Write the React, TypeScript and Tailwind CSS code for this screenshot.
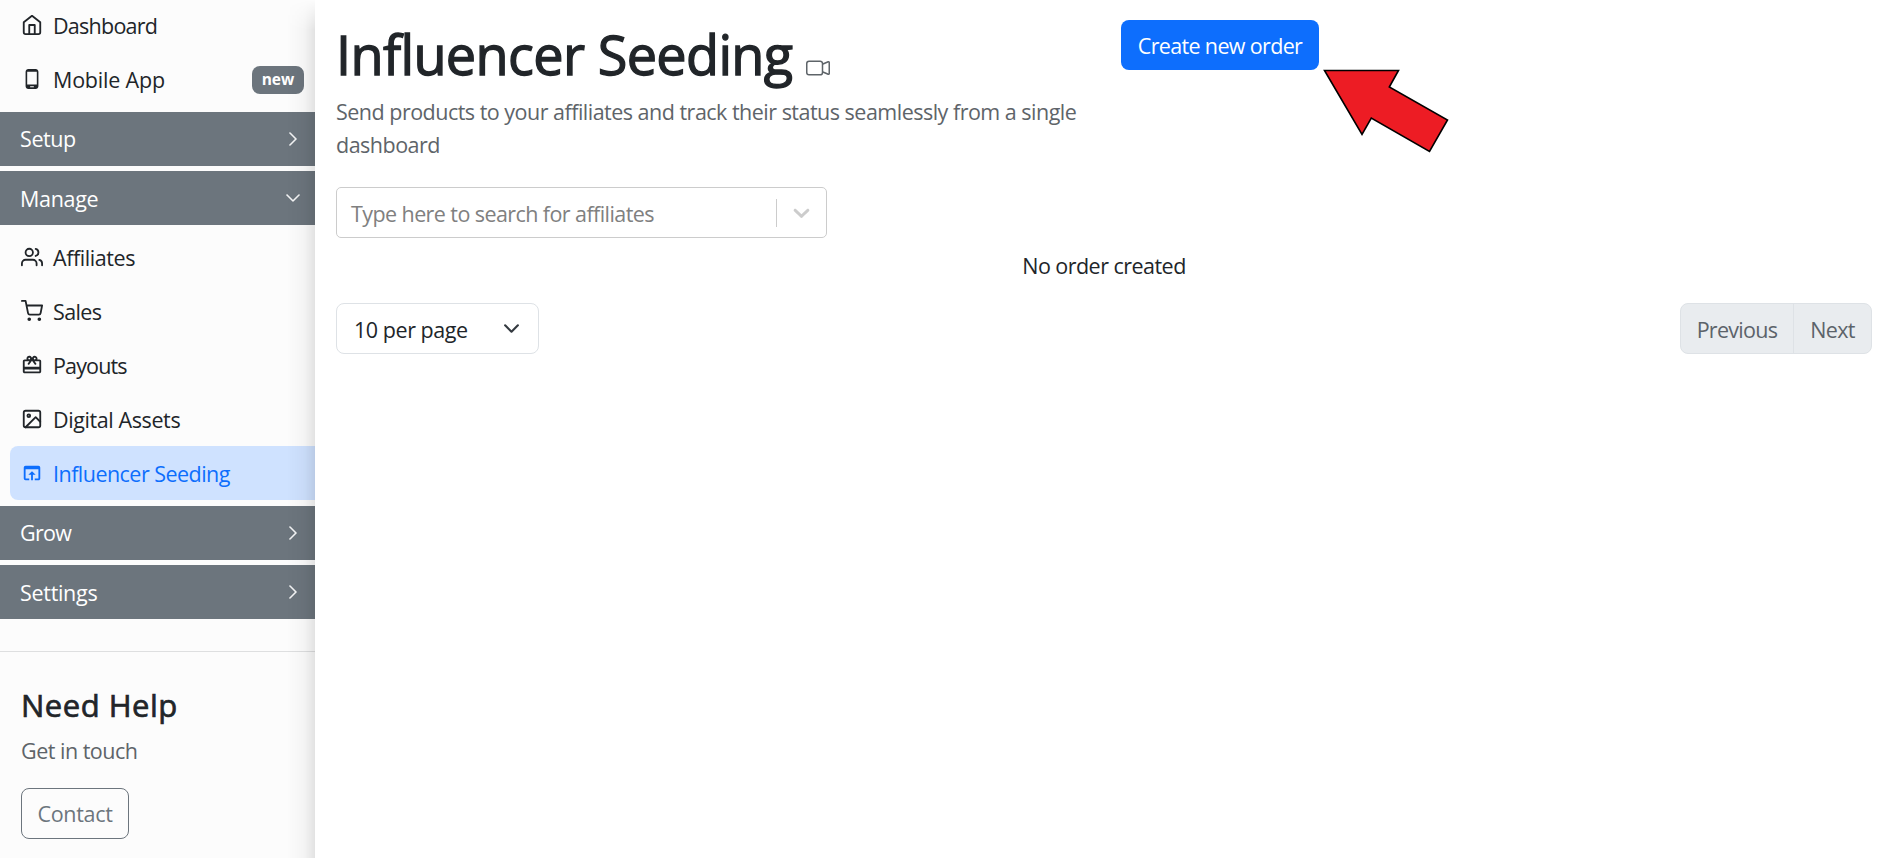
import type { ReactNode } from "react";
import { FiHome, FiImage, FiShoppingCart, FiUsers } from "react-icons/fi";
import { MdCardGiftcard, MdOpenInBrowser, MdPhoneAndroid } from "react-icons/md";
import { BsCameraVideo, BsChevronDown, BsChevronRight } from "react-icons/bs";

type ItemProps = { icon: ReactNode; label: string; text: string; active?: boolean; badge?: string };

function NavItem({ icon, label, text, active, badge }: ItemProps) {
  return (
    <a
      className={`ml-[10px] flex h-[54px] shrink-0 items-center rounded-l-lg pl-[11px] ${
        active ? "bg-[#cfe2ff] text-[#0d6efd]" : "text-[#212529]"
      }`}
    >
      <span className="flex w-[22px] justify-center text-[22px]">{icon}</span>
      <span className={`ml-[10px] whitespace-nowrap ${text}`}>{label}</span>
      {badge && (
        <span className="mr-[11px] mb-px ml-auto flex h-7 w-[52px] items-center justify-center rounded-lg bg-[#6c757d] pt-px text-[15.5px] font-bold text-white">
          {badge}
        </span>
      )}
    </a>
  );
}

function Section({ label, text, open, className }: { label: string; text: string; open?: boolean; className: string }) {
  return (
    <div className={`flex h-[54px] shrink-0 items-center justify-between bg-[#6c757d] pr-[14px] pl-5 text-white ${className}`}>
      <span className={text}>{label}</span>
      <span className="mb-[1px] stroke-white text-[16px] [&_svg]:stroke-[0.6]">
        {open ? <BsChevronDown /> : <BsChevronRight />}
      </span>
    </div>
  );
}

function Sidebar() {
  return (
    <aside className="relative flex w-[315px] shrink-0 flex-col bg-[#fcfcfc]">
      <div className="-mt-px flex flex-col">
        <NavItem icon={<FiHome className="-mt-[3px]" />} label="Dashboard" text="tracking-[-0.75px]" />
        <NavItem icon={<MdPhoneAndroid className="-mt-[2px]" />} label="Mobile App" text="tracking-[-0.2px]" badge="new" />
      </div>
      <Section label="Setup" text="tracking-[-0.4px]" className="mt-[5px]" />
      <Section label="Manage" text="pt-0.5 tracking-[-0.3px]" open className="mt-[5px] mb-[5px]" />
      <NavItem icon={<FiUsers />} label="Affiliates" text="pt-0.5 tracking-[-0.43px]" />
      <NavItem icon={<FiShoppingCart />} label="Sales" text="pt-0.5 tracking-[-0.65px]" />
      <NavItem icon={<MdCardGiftcard />} label="Payouts" text="pt-0.5 tracking-[-0.85px]" />
      <NavItem icon={<FiImage />} label="Digital Assets" text="pt-0.5 tracking-[-0.4px]" />
      <NavItem icon={<MdOpenInBrowser />} label="Influencer Seeding" text="pt-0.5 tracking-[-0.53px]" active />
      <Section label="Grow" text="tracking-[-0.7px]" className="mt-[6px]" />
      <Section label="Settings" text="pt-0.5 tracking-[-0.3px]" className="mt-[5px]" />
      <hr className="mt-8 border-[#dedfe0]" />
      <div className="flex flex-col items-start pl-[21px]">
        <h2 className="mt-[33px] text-[31px] leading-[40px] tracking-[0.5px] [-webkit-text-stroke:0.7px]">Need Help</h2>
        <p className="mt-[9px] leading-[33px] tracking-[-0.5px] text-[#5e6469]">Get in touch</p>
        <button className="mt-[21px] flex h-[51px] w-[108px] items-center justify-center rounded-lg border border-[#6c757d] pt-0.5 tracking-[-0.3px] text-[#6c757d]">
          Contact
        </button>
      </div>
      <div className="pointer-events-none absolute inset-y-0 right-0 w-7 bg-linear-to-l from-black/10 via-black/3 via-40% to-transparent mask-t-from-[828px] mask-t-to-[858px]" />
    </aside>
  );
}

export default function App() {
  return (
    <div className="flex h-[858px] w-[1889px] overflow-hidden bg-white font-['Open_Sans','Noto_Sans',sans-serif] text-[21.5px] text-[#212529]">
      <Sidebar />
      <main className="flex flex-1 flex-col pr-[17px] pl-[21px]">
        <header className="relative flex items-start pt-5">
          <div className="w-[785px]">
            <div className="flex h-[69px] items-start">
              <h1 className="-mt-px text-[54px] leading-[70px] whitespace-nowrap tracking-[-0.65px] [-webkit-text-stroke:1.3px]">
                Influencer Seeding
              </h1>
              <BsCameraVideo className="mt-9 ml-[13px] text-[24px] text-[#5e6469]" />
            </div>
            <p className="mt-[6px] w-[760px] leading-[33px] tracking-[-0.51px] text-[#5e6469]">
              Send products to your affiliates and track their status seamlessly from a single
              <br />
              dashboard
            </p>
          </div>
          <button className="flex h-[50px] w-[198px] items-center justify-center rounded-lg bg-[#0d6efd] pt-[3px] whitespace-nowrap tracking-[-0.65px] text-white">
            Create new order
          </button>
          <svg className="absolute top-[66px] left-[984px]" width="132" height="92" viewBox="1320 66 132 92">
            <path
              d="M1324.5 70.5H1398.5L1389.3 87L1447.5 120L1429.5 151.5L1371.3 118L1362 134.5Z"
              fill="#ed1c24"
              stroke="#000"
              strokeWidth="1.6"
            />
          </svg>
        </header>
        <div className="mt-[26px] flex h-[51px] w-[491px] items-center rounded-[5px] border border-[#cccccc] pl-[14px]">
          <span className="flex-1 pt-[3px] whitespace-nowrap tracking-[-0.58px] text-[#808080]">Type here to search for affiliates</span>
          <span className="h-7 w-px bg-[#cccccc]" />
          <svg className="mx-[11px]" width="27" height="27" viewBox="0 0 20 20" fill="#cccccc">
            <path d="M4.516 7.548c0.436-0.446 1.043-0.481 1.576 0l3.908 3.747 3.908-3.747c0.533-0.481 1.141-0.446 1.574 0 0.436 0.445 0.408 1.197 0 1.615-0.406 0.418-4.695 4.502-4.695 4.502-0.217 0.223-0.502 0.335-0.787 0.335s-0.57-0.112-0.789-0.335c0 0-4.287-4.084-4.695-4.502s-0.436-1.17 0-1.615z" />
          </svg>
        </div>
        <p className="mt-[11px] text-center leading-[33px] tracking-[-0.53px]">No order created</p>
        <div className="mt-[21px] flex justify-between">
          <div className="flex h-[51px] w-[203px] items-center justify-between rounded-lg border border-[#dee2e6] pr-[18px] pl-[17px]">
            <span className="pt-[3px] tracking-[-0.45px]">10 per page</span>
            <svg width="17" height="17" viewBox="0 0 16 16" fill="none" stroke="#343a40" strokeWidth="2" strokeLinecap="round" strokeLinejoin="round">
              <path d="m2 5 6 6 6-6" />
            </svg>
          </div>
          <div className="flex h-[51px] w-[192px] overflow-hidden rounded-lg border border-[#dee2e6] bg-[#e9ecef] tracking-[-0.7px] text-[#5c636a]">
            <button className="flex w-[113px] items-center justify-center border-r border-[#dee2e6] pt-[3px]">Previous</button>
            <button className="flex flex-1 items-center justify-center pt-[3px]">Next</button>
          </div>
        </div>
      </main>
    </div>
  );
}
